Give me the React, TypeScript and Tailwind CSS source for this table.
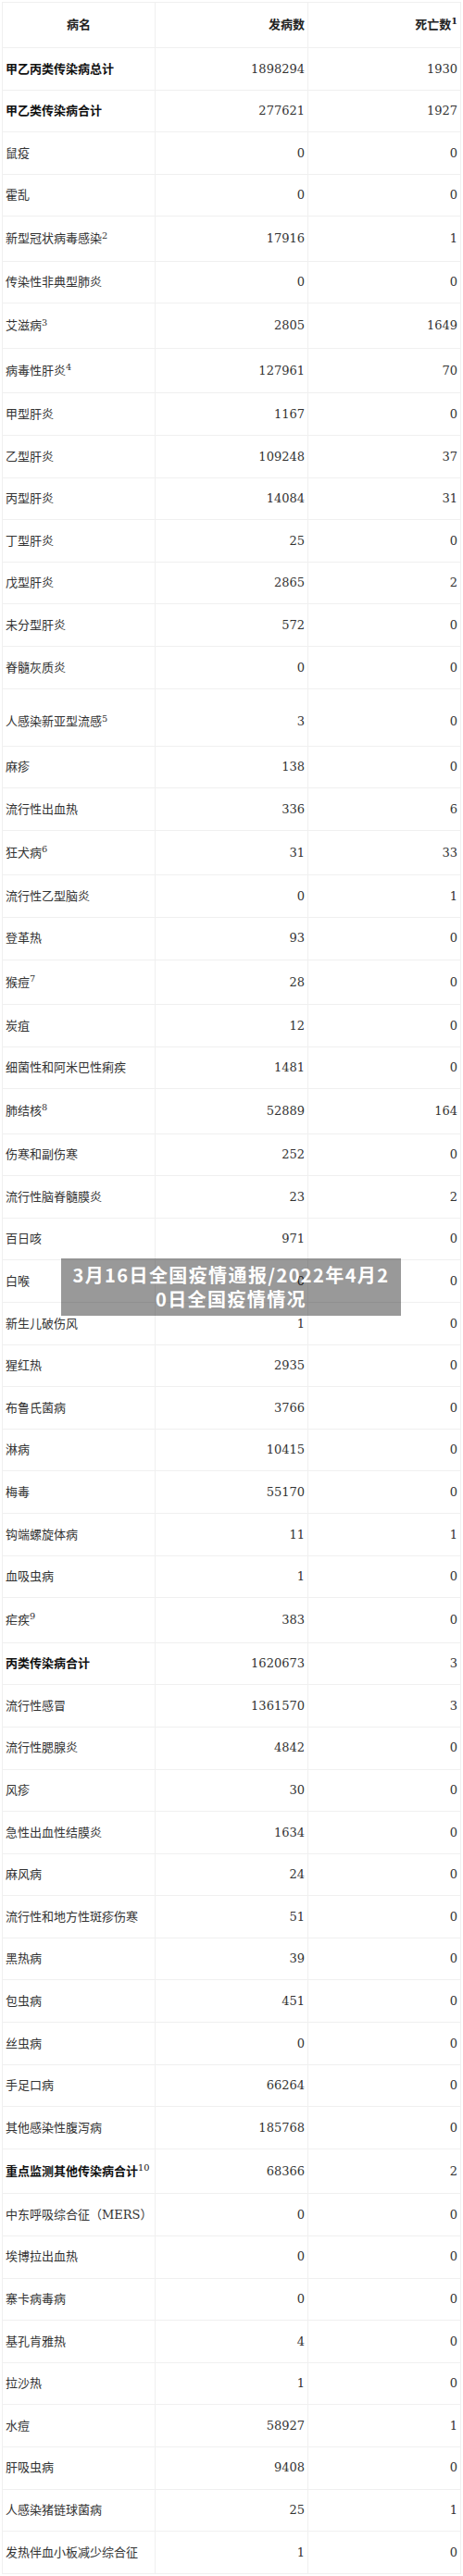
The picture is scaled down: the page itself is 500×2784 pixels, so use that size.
import React from 'react';

type Row = {
  name: string;
  note?: string;
  cases: string;
  deaths: string;
  bold?: boolean;
  tall?: boolean;
};

const rows: Row[] = [
  { name: '甲乙丙类传染病总计', cases: '1898294', deaths: '1930', bold: true },
  { name: '甲乙类传染病合计', cases: '277621', deaths: '1927', bold: true },
  { name: '鼠疫', cases: '0', deaths: '0' },
  { name: '霍乱', cases: '0', deaths: '0' },
  { name: '新型冠状病毒感染', note: '2', cases: '17916', deaths: '1' },
  { name: '传染性非典型肺炎', cases: '0', deaths: '0' },
  { name: '艾滋病', note: '3', cases: '2805', deaths: '1649' },
  { name: '病毒性肝炎', note: '4', cases: '127961', deaths: '70' },
  { name: '甲型肝炎', cases: '1167', deaths: '0' },
  { name: '乙型肝炎', cases: '109248', deaths: '37' },
  { name: '丙型肝炎', cases: '14084', deaths: '31' },
  { name: '丁型肝炎', cases: '25', deaths: '0' },
  { name: '戊型肝炎', cases: '2865', deaths: '2' },
  { name: '未分型肝炎', cases: '572', deaths: '0' },
  { name: '脊髓灰质炎', cases: '0', deaths: '0' },
  { name: '人感染新亚型流感', note: '5', cases: '3', deaths: '0', tall: true },
  { name: '麻疹', cases: '138', deaths: '0' },
  { name: '流行性出血热', cases: '336', deaths: '6' },
  { name: '狂犬病', note: '6', cases: '31', deaths: '33' },
  { name: '流行性乙型脑炎', cases: '0', deaths: '1' },
  { name: '登革热', cases: '93', deaths: '0' },
  { name: '猴痘', note: '7', cases: '28', deaths: '0' },
  { name: '炭疽', cases: '12', deaths: '0' },
  { name: '细菌性和阿米巴性痢疾', cases: '1481', deaths: '0' },
  { name: '肺结核', note: '8', cases: '52889', deaths: '164' },
  { name: '伤寒和副伤寒', cases: '252', deaths: '0' },
  { name: '流行性脑脊髓膜炎', cases: '23', deaths: '2' },
  { name: '百日咳', cases: '971', deaths: '0' },
  { name: '白喉', cases: '0', deaths: '0' },
  { name: '新生儿破伤风', cases: '1', deaths: '0' },
  { name: '猩红热', cases: '2935', deaths: '0' },
  { name: '布鲁氏菌病', cases: '3766', deaths: '0' },
  { name: '淋病', cases: '10415', deaths: '0' },
  { name: '梅毒', cases: '55170', deaths: '0' },
  { name: '钩端螺旋体病', cases: '11', deaths: '1' },
  { name: '血吸虫病', cases: '1', deaths: '0' },
  { name: '疟疾', note: '9', cases: '383', deaths: '0' },
  { name: '丙类传染病合计', cases: '1620673', deaths: '3', bold: true },
  { name: '流行性感冒', cases: '1361570', deaths: '3' },
  { name: '流行性腮腺炎', cases: '4842', deaths: '0' },
  { name: '风疹', cases: '30', deaths: '0' },
  { name: '急性出血性结膜炎', cases: '1634', deaths: '0' },
  { name: '麻风病', cases: '24', deaths: '0' },
  { name: '流行性和地方性斑疹伤寒', cases: '51', deaths: '0' },
  { name: '黑热病', cases: '39', deaths: '0' },
  { name: '包虫病', cases: '451', deaths: '0' },
  { name: '丝虫病', cases: '0', deaths: '0' },
  { name: '手足口病', cases: '66264', deaths: '0' },
  { name: '其他感染性腹泻病', cases: '185768', deaths: '0' },
  { name: '重点监测其他传染病合计', note: '10', cases: '68366', deaths: '2', bold: true },
  { name: '中东呼吸综合征（MERS）', cases: '0', deaths: '0' },
  { name: '埃博拉出血热', cases: '0', deaths: '0' },
  { name: '寨卡病毒病', cases: '0', deaths: '0' },
  { name: '基孔肯雅热', cases: '4', deaths: '0' },
  { name: '拉沙热', cases: '1', deaths: '0' },
  { name: '水痘', cases: '58927', deaths: '1' },
  { name: '肝吸虫病', cases: '9408', deaths: '0' },
  { name: '人感染猪链球菌病', cases: '25', deaths: '1' },
  { name: '发热伴血小板减少综合征', cases: '1', deaths: '0' },
];

const rowHeight = (r: Row) => {
  if (r.tall) return 'h-[62px]';
  if (r.note) return 'h-[48.5px]';
  return 'h-[45.6px]';
};

const App: React.FC = () => {
  return (
    <div className="relative bg-white px-[2px] pt-[2px] font-['DejaVu_Serif','Noto_Sans_CJK_SC',serif] text-[13px] text-[#333]">
      <table className="w-full table-fixed border-collapse">
        <thead>
          <tr className="h-[49px]">
            <th className="border border-[#f0f0f0] px-[3px] text-center font-bold text-[#222]">病名</th>
            <th className="border border-[#f0f0f0] px-[3px] text-right font-bold text-[#222]">发病数</th>
            <th className="border border-[#f0f0f0] px-[3px] text-right font-bold text-[#222]">
              死亡数<sup>1</sup>
            </th>
          </tr>
        </thead>
        <tbody>
          {rows.map((r) => (
            <tr key={r.name} className={rowHeight(r)}>
              <td
                className={`border border-[#f0f0f0] px-[3px] align-middle ${
                  r.bold ? 'font-bold text-[#111]' : ''
                } ${r.tall ? 'pt-[10px]' : ''}`}
              >
                {r.name}
                {r.note && <sup className="font-normal">{r.note}</sup>}
              </td>
              <td className={`border border-[#f0f0f0] px-[3px] text-right align-middle ${r.tall ? 'pt-[10px]' : ''}`}>
                {r.cases}
              </td>
              <td className={`border border-[#f0f0f0] px-[3px] text-right align-middle ${r.tall ? 'pt-[10px]' : ''}`}>
                {r.deaths}
              </td>
            </tr>
          ))}
        </tbody>
      </table>

      {/* title overlay */}
      <div className="absolute left-[66px] top-[1360px] flex h-[62px] w-[367px] items-center justify-center bg-black/40">
        <p className="whitespace-nowrap text-center font-['Noto_Sans_CJK_SC',sans-serif] text-[20px] font-bold leading-[26px] tracking-[1.4px] text-white">
          3月16日全国疫情通报/2022年4月2
          <br />
          0日全国疫情情况
        </p>
      </div>
    </div>
  );
};

export default App;
